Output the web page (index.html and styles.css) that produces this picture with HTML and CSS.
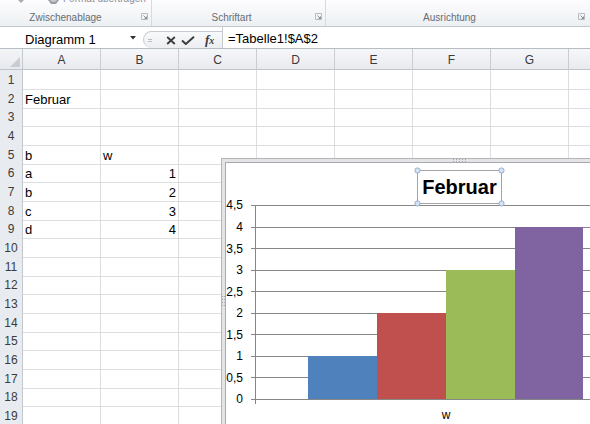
FILE: index.html
```html
<!DOCTYPE html>
<html lang="de">
<head>
<meta charset="utf-8">
<title>Excel Diagramm</title>
<link rel="stylesheet" href="styles.css">
</head>
<body>
<div class="app">
  <div class="ribbon">
    <div class="group g1">
      <div class="group-top">
        <svg class="cut-arrow" width="6" height="3" viewBox="0 0 6 3"><path d="M0 0H6L3 3Z" fill="#a9adb3"/></svg>
        <svg class="brush" width="13" height="6" viewBox="0 0 13 6"><path d="M1 0H12L9 4H4Z" fill="#9a9ea4"/><path d="M3 0H10L8 2H5Z" fill="#c4c7cb"/></svg>
        <span class="cut-text">Format übertragen</span>
      </div>
      <div class="label-row">
        <span class="group-label pad1">Zwischenablage</span>
        <svg class="launcher" width="7" height="7" viewBox="0 0 7 7"><path d="M0.5 0.5H6.5V6.5H0.5Z" fill="none" stroke="#b8bcc2"/><path d="M2.5 2.5L5.5 5.5M3.5 5.5H5.5V3.5" fill="none" stroke="#8b9097"/></svg>
      </div>
    </div>
    <div class="group g2">
      <div class="group-top"></div>
      <div class="label-row">
        <span class="group-label pad2">Schriftart</span>
        <svg class="launcher" width="7" height="7" viewBox="0 0 7 7"><path d="M0.5 0.5H6.5V6.5H0.5Z" fill="none" stroke="#b8bcc2"/><path d="M2.5 2.5L5.5 5.5M3.5 5.5H5.5V3.5" fill="none" stroke="#8b9097"/></svg>
      </div>
    </div>
    <div class="group g3">
      <div class="group-top"></div>
      <div class="label-row">
        <span class="group-label pad3">Ausrichtung</span>
        <svg class="launcher l3" width="7" height="7" viewBox="0 0 7 7"><path d="M0.5 0.5H6.5V6.5H0.5Z" fill="none" stroke="#b8bcc2"/><path d="M2.5 2.5L5.5 5.5M3.5 5.5H5.5V3.5" fill="none" stroke="#8b9097"/></svg>
      </div>
    </div>
  </div>

  <div class="formula-bar">
    <div class="name-box">
      <span class="name-text">Diagramm 1</span>
      <svg class="drop" width="6" height="4" viewBox="0 0 6 4"><path d="M0 0H6L3 3.5Z" fill="#333"/></svg>
    </div>
    <div class="fx-area">
      <span class="grip"></span>
      <svg class="ico-x" width="10" height="9" viewBox="0 0 10 9"><path d="M1.2 1L8.8 8M8.8 1L1.2 8" stroke="#3d3d3d" stroke-width="1.9" fill="none"/></svg>
      <svg class="ico-check" width="14" height="9" viewBox="0 0 14 9"><path d="M1 4.5L4.8 8L13 0.8" stroke="#3d3d3d" stroke-width="2" fill="none"/></svg>
      <span class="fx">f<span class="fx-x">x</span></span>
    </div>
    <div class="formula-input">=Tabelle1!$A$2</div>
  </div>

  <div class="sheet">
    <div class="row head">
      <div class="corner"><svg width="10" height="10" viewBox="0 0 10 10"><path d="M10 0V10H0Z" fill="#c9cdd3"/></svg></div>
      <div class="ch">A</div><div class="ch">B</div><div class="ch">C</div><div class="ch">D</div><div class="ch">E</div><div class="ch">F</div><div class="ch">G</div><div class="ch"></div>
    </div>
    <div class="row"><div class="rh">1</div><div class="c"></div><div class="c"></div><div class="c"></div><div class="c"></div><div class="c"></div><div class="c"></div><div class="c"></div><div class="c"></div></div>
    <div class="row"><div class="rh">2</div><div class="c">Februar</div><div class="c"></div><div class="c"></div><div class="c"></div><div class="c"></div><div class="c"></div><div class="c"></div><div class="c"></div></div>
    <div class="row"><div class="rh">3</div><div class="c"></div><div class="c"></div><div class="c"></div><div class="c"></div><div class="c"></div><div class="c"></div><div class="c"></div><div class="c"></div></div>
    <div class="row"><div class="rh">4</div><div class="c"></div><div class="c"></div><div class="c"></div><div class="c"></div><div class="c"></div><div class="c"></div><div class="c"></div><div class="c"></div></div>
    <div class="row"><div class="rh">5</div><div class="c">b</div><div class="c">w</div><div class="c"></div><div class="c"></div><div class="c"></div><div class="c"></div><div class="c"></div><div class="c"></div></div>
    <div class="row"><div class="rh">6</div><div class="c">a</div><div class="c num">1</div><div class="c"></div><div class="c"></div><div class="c"></div><div class="c"></div><div class="c"></div><div class="c"></div></div>
    <div class="row"><div class="rh">7</div><div class="c">b</div><div class="c num">2</div><div class="c"></div><div class="c"></div><div class="c"></div><div class="c"></div><div class="c"></div><div class="c"></div></div>
    <div class="row"><div class="rh">8</div><div class="c">c</div><div class="c num">3</div><div class="c"></div><div class="c"></div><div class="c"></div><div class="c"></div><div class="c"></div><div class="c"></div></div>
    <div class="row"><div class="rh">9</div><div class="c">d</div><div class="c num">4</div><div class="c"></div><div class="c"></div><div class="c"></div><div class="c"></div><div class="c"></div><div class="c"></div></div>
    <div class="row"><div class="rh">10</div><div class="c"></div><div class="c"></div><div class="c"></div><div class="c"></div><div class="c"></div><div class="c"></div><div class="c"></div><div class="c"></div></div>
    <div class="row"><div class="rh">11</div><div class="c"></div><div class="c"></div><div class="c"></div><div class="c"></div><div class="c"></div><div class="c"></div><div class="c"></div><div class="c"></div></div>
    <div class="row"><div class="rh">12</div><div class="c"></div><div class="c"></div><div class="c"></div><div class="c"></div><div class="c"></div><div class="c"></div><div class="c"></div><div class="c"></div></div>
    <div class="row"><div class="rh">13</div><div class="c"></div><div class="c"></div><div class="c"></div><div class="c"></div><div class="c"></div><div class="c"></div><div class="c"></div><div class="c"></div></div>
    <div class="row"><div class="rh">14</div><div class="c"></div><div class="c"></div><div class="c"></div><div class="c"></div><div class="c"></div><div class="c"></div><div class="c"></div><div class="c"></div></div>
    <div class="row"><div class="rh">15</div><div class="c"></div><div class="c"></div><div class="c"></div><div class="c"></div><div class="c"></div><div class="c"></div><div class="c"></div><div class="c"></div></div>
    <div class="row"><div class="rh">16</div><div class="c"></div><div class="c"></div><div class="c"></div><div class="c"></div><div class="c"></div><div class="c"></div><div class="c"></div><div class="c"></div></div>
    <div class="row"><div class="rh">17</div><div class="c"></div><div class="c"></div><div class="c"></div><div class="c"></div><div class="c"></div><div class="c"></div><div class="c"></div><div class="c"></div></div>
    <div class="row"><div class="rh">18</div><div class="c"></div><div class="c"></div><div class="c"></div><div class="c"></div><div class="c"></div><div class="c"></div><div class="c"></div><div class="c"></div></div>
    <div class="row"><div class="rh">19</div><div class="c"></div><div class="c"></div><div class="c"></div><div class="c"></div><div class="c"></div><div class="c"></div><div class="c"></div><div class="c"></div></div>

    <svg class="chart" width="369" height="266" viewBox="0 0 369 266">
      <rect x="0.5" y="0.5" width="420" height="300" fill="#e3e4e6" stroke="#b3b5b8"/>
      <rect x="4.5" y="4.5" width="420" height="300" fill="#ffffff" stroke="#a8aaad"/>
      <g fill="#a3a5a8">
        <rect x="232" y="1" width="1" height="1"/><rect x="235" y="1" width="1" height="1"/><rect x="238" y="1" width="1" height="1"/><rect x="241" y="1" width="1" height="1"/><rect x="244" y="1" width="1" height="1"/>
        <rect x="232" y="3" width="1" height="1"/><rect x="235" y="3" width="1" height="1"/><rect x="238" y="3" width="1" height="1"/><rect x="241" y="3" width="1" height="1"/><rect x="244" y="3" width="1" height="1"/>
        <rect x="1" y="138" width="1" height="1"/><rect x="1" y="141" width="1" height="1"/><rect x="1" y="144" width="1" height="1"/><rect x="1" y="147" width="1" height="1"/>
        <rect x="3" y="138" width="1" height="1"/><rect x="3" y="141" width="1" height="1"/><rect x="3" y="144" width="1" height="1"/><rect x="3" y="147" width="1" height="1"/>
      </g>
      <g stroke="#878787" stroke-width="1">
        <path d="M30 47.5H369M30 69.5H369M30 90.5H369M30 112.5H369M30 133.5H369M30 155.5H369M30 176.5H369M30 198.5H369M30 219.5H369"/>
      </g>
      <rect x="87" y="198" width="69" height="43" fill="#4f81bd"/>
      <rect x="156" y="155" width="69" height="86" fill="#c0504d"/>
      <rect x="225" y="112" width="69" height="129" fill="#9bbb59"/>
      <rect x="294" y="69" width="68" height="172" fill="#8064a2"/>
      <path d="M34.5 47V246M30 241.5H369" stroke="#868686" stroke-width="1"/>
      <g class="axis-label" text-anchor="end">
        <text x="22" y="51.3">4,5</text>
        <text x="22" y="73">4</text>
        <text x="22" y="94.5">3,5</text>
        <text x="22" y="116">3</text>
        <text x="22" y="137.6">2,5</text>
        <text x="22" y="159.1">2</text>
        <text x="22" y="180.7">1,5</text>
        <text x="22" y="202.2">1</text>
        <text x="22" y="223.8">0,5</text>
        <text x="22" y="245.3">0</text>
      </g>
      <text class="axis-label" x="225" y="261" text-anchor="middle">w</text>
      <rect x="196.5" y="12.5" width="84" height="33" fill="#ffffff" stroke="#a5a5a5"/>
      <text class="chart-title" x="238.5" y="36" text-anchor="middle">Februar</text>
      <g fill="#d6e3f2" stroke="#86a6c9" stroke-width="0.9">
        <circle cx="196.5" cy="12.5" r="2.6"/><circle cx="280.5" cy="12.5" r="2.6"/>
        <circle cx="196.5" cy="45.5" r="2.6"/><circle cx="280.5" cy="45.5" r="2.6"/>
      </g>
    </svg>
  </div>
</div>
</body>
</html>
```

FILE: styles.css
```css
* {
  box-sizing: border-box;
  margin: 0;
  padding: 0;
}

html, body {
  width: 590px;
  height: 424px;
  overflow: hidden;
  background: #ffffff;
}

body {
  font-family: "Liberation Sans", Arial, sans-serif;
  color: #000;
}

.app {
  width: 590px;
  height: 424px;
  overflow: hidden;
}

/* Ribbon */
.ribbon {
  display: flex;
  height: 27px;
  border-bottom: 1px solid #c3c8cf;
  background: linear-gradient(#fdfdfe, #f3f5f7 60%, #eceff3);
}

.group {
  display: flex;
  flex-direction: column;
  border-right: 1px solid #d7dbe0;
}

.g1 { width: 152px; }
.g2 { width: 174px; }
.g3 { flex: 1; border-right: none; }

.group-top {
  display: flex;
  align-items: flex-start;
  height: 8px;
  overflow: hidden;
  padding-left: 18px;
}

.cut-arrow { flex: none; }

.brush {
  flex: none;
  margin-left: 23px;
}

.cut-text {
  margin-left: 3px;
  margin-top: -6px;
  font-size: 10px;
  line-height: 10px;
  color: #8d9096;
  white-space: nowrap;
}

.label-row {
  display: flex;
  height: 18px;
}

.group-label {
  flex: 1;
  text-align: center;
  font-size: 10px;
  line-height: 16px;
  padding-top: 2px;
  color: #676c74;
  white-space: nowrap;
}

.pad1 { padding-right: 10px; }
.pad2 { padding-right: 4px; }
.pad3 { padding-right: 5px; }

.launcher {
  flex: none;
  margin-top: 5px;
  margin-right: 3px;
}

.l3 { margin-right: 5px; }

/* Formula bar */
.formula-bar {
  display: flex;
  height: 22px;
  border-bottom: 1px solid #b7bdc5;
  background: #ffffff;
}

.name-box {
  display: flex;
  align-items: center;
  width: 143px;
  padding-left: 25px;
  padding-top: 3px;
  font-size: 13px;
}

.name-text { white-space: nowrap; }

.drop {
  margin-left: auto;
  margin-right: 7px;
  margin-top: -2px;
}

.fx-area {
  display: flex;
  align-items: center;
  width: 79px;
  margin-top: 4px;
  border: 1px solid #c7cbd1;
  border-right: none;
  border-bottom: none;
  border-radius: 9px 0 0 9px;
  background: linear-gradient(#f8f9fa, #eceef1);
}

.grip {
  width: 4px;
  height: 3px;
  margin-left: 4px;
  border-top: 1px solid #b9bdc3;
  border-bottom: 1px solid #b9bdc3;
}

.ico-x {
  margin-left: 14px;
}

.ico-check {
  margin-left: 5px;
}

.fx {
  margin-left: 10px;
  font-family: "Liberation Serif", "Times New Roman", serif;
  font-style: italic;
  font-weight: bold;
  font-size: 13px;
  color: #3d3d3d;
  line-height: 13px;
}

.fx-x {
  font-size: 10px;
}

.formula-input {
  flex: 1;
  border-left: 1px solid #c7cbd1;
  padding-left: 5px;
  padding-top: 3px;
  font-size: 13px;
  line-height: 18px;
  white-space: nowrap;
}

/* Sheet */
.sheet {
  position: relative;
  width: 590px;
  overflow: hidden;
}

.row {
  display: grid;
  grid-template-columns: 23px repeat(8, 78px);
  width: 647px;
  height: 18.67px;
}

.row.head {
  height: 21px;
}

.corner {
  display: flex;
  align-items: flex-end;
  justify-content: flex-end;
  padding: 0 2px 2px 0;
  background: linear-gradient(#f4f5f7, #e7e9ed);
  border-right: 1px solid #c3c8cf;
  border-bottom: 1px solid #bfc4cb;
}

.ch {
  text-align: center;
  font-size: 12px;
  line-height: 17px;
  padding-top: 3px;
  color: #3b3b3b;
  background: linear-gradient(#f6f7f9, #e8eaee);
  border-right: 1px solid #c9cdd3;
  border-bottom: 1px solid #bfc4cb;
}

.rh {
  text-align: center;
  font-size: 12px;
  line-height: 17px;
  padding-top: 2px;
  color: #3b3b3b;
  background: #e8ebef;
  border-right: 1px solid #c3c8cf;
  border-bottom: 1px solid #cdd1d6;
}

.c {
  font-size: 13px;
  line-height: 17px;
  padding: 2px 2px 0 2px;
  white-space: nowrap;
  overflow: hidden;
  border-right: 1px solid #dcdee1;
  border-bottom: 1px solid #dcdee1;
}

.c.num {
  text-align: right;
}

/* Chart overlay */
.chart {
  position: absolute;
  left: 221px;
  top: 109px;
}

.axis-label {
  font-family: "Liberation Sans", Arial, sans-serif;
  font-size: 12px;
  fill: #000;
}

.chart-title {
  font-family: "Liberation Sans", Arial, sans-serif;
  font-size: 20px;
  font-weight: bold;
  fill: #000;
}
```
